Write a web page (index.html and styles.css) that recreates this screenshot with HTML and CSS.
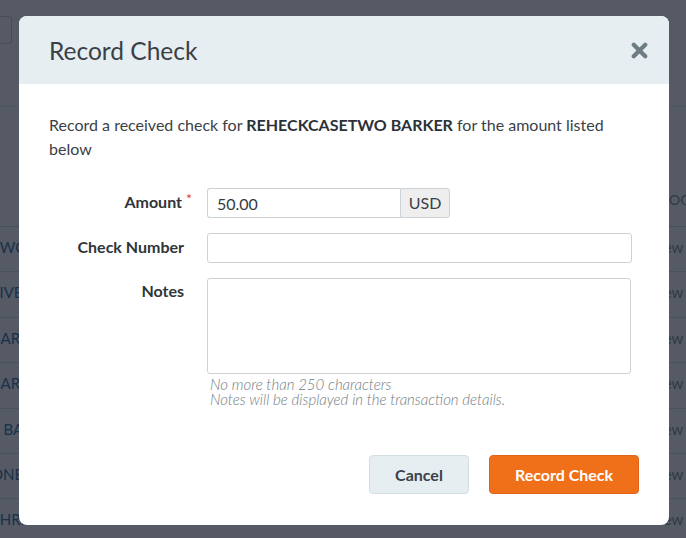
FILE: index.html
```html
<!DOCTYPE html>
<html lang="en">
<head>
  <meta charset="UTF-8" />
  <meta name="viewport" content="width=device-width, initial-scale=1.0" />
  <title>Record Check</title>
  <link rel="stylesheet" href="styles.css">
</head>
<body>
  <div id="page">
    <div class="toolbar">
      <input type="text" class="search" />
    </div>
    <div class="table">
      <div class="row head"><span class="name"></span><span class="action">PROGRESS</span></div>
      <div class="row"><span class="name">TWO BARKER</span><span class="action">View Transactions</span></div>
      <div class="row"><span class="name">FIVE BARKER</span><span class="action">View Transactions</span></div>
      <div class="row"><span class="name">BARKER</span><span class="action">View Transactions</span></div>
      <div class="row"><span class="name">BARKER</span><span class="action">View Transactions</span></div>
      <div class="row"><span class="name">E BARKER</span><span class="action">View Transactions</span></div>
      <div class="row"><span class="name">ONE BARKER</span><span class="action">View Transactions</span></div>
      <div class="row"><span class="name">THREE BARKER</span><span class="action">View Transactions</span></div>
    </div>
  </div>

  <div id="overlay"></div>

  <div id="modal">
    <div class="modal-header">
      <h1>Record Check</h1>
      <button class="close" aria-label="Close">
        <svg width="17" height="17" viewBox="0 0 16 16">
          <path d="M2.6 2.6 L13.4 13.4 M13.4 2.6 L2.6 13.4" stroke="#6e7c83" stroke-width="4" stroke-linecap="round" fill="none" />
        </svg>
      </button>
    </div>
    <div class="modal-body">
      <p class="intro">Record a received check for <b>REHECKCASETWO BARKER</b> for the amount listed below</p>
      <div class="form">
        <label class="field-label required">Amount<span class="star">*</span></label>
        <div class="input-group">
          <input type="text" value="50.00" />
          <span class="addon">USD</span>
        </div>

        <label class="field-label">Check Number</label>
        <input type="text" class="field" />

        <label class="field-label top">Notes</label>
        <div>
          <textarea class="field notes"></textarea>
          <div class="help">No more than 250 characters<br>Notes will be displayed in the transaction details.</div>
        </div>
      </div>
    </div>
    <div class="modal-footer">
      <button class="btn btn-cancel">Cancel</button>
      <button class="btn btn-primary">Record Check</button>
    </div>
  </div>
</body>
</html>
```

FILE: styles.css
```css
body {
  margin: 0;
  background: #fff;
  font-family: Lato, "Open Sans", sans-serif;
  color: #3a4046;
  overflow: hidden;
}
#page {
  height: 538px;
  overflow: hidden;
}
.toolbar {
  height: 107px;
  border-bottom: 1px solid #e4e8eb;
  padding-top: 16px;
  box-sizing: border-box;
}
.search {
  display: block;
  margin-left: -200px;
  width: 212px;
  height: 28px;
  box-sizing: border-box;
  border: 1px solid #ccd3d8;
  border-radius: 3px;
}
.table {
  margin-top: 75px;
}
.row {
  display: flex;
  justify-content: space-between;
  height: 45.4px;
  box-sizing: border-box;
  line-height: 41px;
  border-bottom: 1px solid #dde3e7;
  font-size: 15px;
  white-space: nowrap;
  overflow: hidden;
}
.row.head {
  height: 45px;
  line-height: 36px;
  font-size: 14px;
  color: #8a9399;
  border-bottom: 1px solid #d0d8dc;
}
.name {
  margin-left: -9px;
  color: #1f6ea5;
}
.action {
  flex: none;
  width: 36px;
  color: #7d878d;
}
.head .action {
  text-indent: 2px;
}
#overlay {
  position: fixed;
  inset: 0;
  background: rgba(20, 26, 40, 0.72);
}
#modal {
  position: fixed;
  top: 16px;
  left: 19px;
  width: 650px;
  background: #fff;
  border-radius: 8px;
  overflow: hidden;
}
.modal-header {
  height: 68px;
  background: #e6eef1;
  display: flex;
  align-items: center;
  justify-content: space-between;
  padding: 0 21px 0 30px;
}
.modal-header h1 {
  margin: 0;
  font-size: 24.5px;
  font-weight: 400;
  color: #3a4046;
}
.close {
  background: none;
  border: none;
  padding: 0;
  cursor: pointer;
  display: flex;
}
.modal-body {
  padding: 29px 30px 0 30px;
}
.intro {
  margin: 0;
  font-size: 16px;
  line-height: 24px;
  color: #3b4147;
}
.intro b {
  color: #2b3137;
}
.form {
  display: grid;
  grid-template-columns: 135px 1fr;
  column-gap: 23px;
  row-gap: 15px;
  margin: 27px 7px 0 0;
}
.field-label {
  font-size: 16px;
  font-weight: bold;
  color: #2f353a;
  text-align: right;
  align-self: center;
  position: relative;
  top: -2px;
}
.field-label.top {
  align-self: start;
  padding-top: 3px;
  top: 0;
}
.required {
  margin-right: 2px;
}
.star {
  position: absolute;
  right: -10px;
  top: -2px;
  color: #d9383a;
  font-size: 14px;
  font-weight: normal;
}
.input-group {
  display: flex;
  width: 243px;
  height: 30px;
}
.input-group input {
  flex: 1;
  min-width: 0;
  border: 1px solid #ccd3d8;
  border-right: none;
  border-radius: 3px 0 0 3px;
  padding: 0 9px;
  font-family: inherit;
  font-size: 16px;
  color: #343a40;
}
.addon {
  width: 50px;
  box-sizing: border-box;
  border: 1px solid #ccd3d8;
  border-radius: 0 3px 3px 0;
  background: #eeeeee;
  font-size: 16px;
  color: #3a4046;
  text-align: center;
  line-height: 28px;
}
.field {
  display: block;
  width: 100%;
  height: 30px;
  box-sizing: border-box;
  border: 1px solid #ccd3d8;
  border-radius: 3px;
  font-family: inherit;
  font-size: 15px;
}
.field.notes {
  height: 96px;
  resize: none;
  width: 424px;
}
.help {
  margin: 3px 0 0 3px;
  font-size: 15px;
  line-height: 15px;
  font-style: italic;
  font-weight: 300;
  color: #727d83;
}
.modal-footer {
  display: flex;
  justify-content: flex-end;
  gap: 20px;
  padding: 48px 30px 31px 30px;
}
.btn {
  height: 39px;
  border-radius: 4px;
  font-family: inherit;
  font-size: 16px;
  font-weight: bold;
  cursor: pointer;
}
.btn-cancel {
  width: 100px;
  background: #e6eef1;
  border: 1px solid #d3dee3;
  color: #3a4148;
}
.btn-primary {
  width: 150px;
  background: #f07019;
  border: 1px solid #e0651a;
  color: #fff;
}
```
